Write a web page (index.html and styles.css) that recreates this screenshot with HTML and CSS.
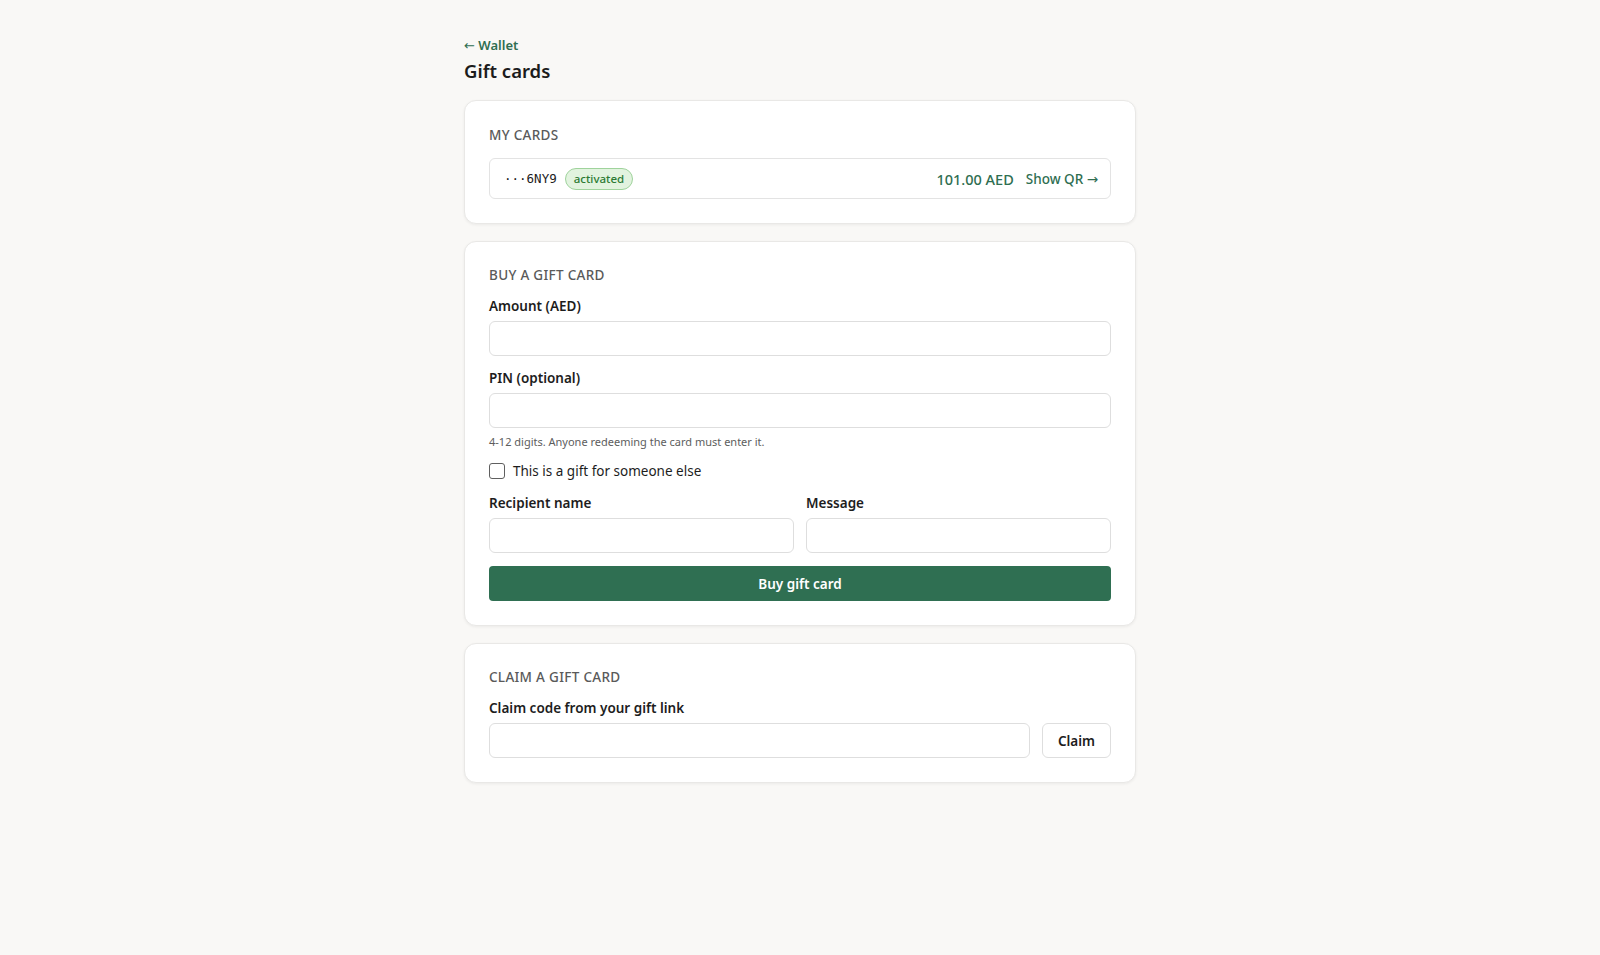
FILE: index.html
```html
<!DOCTYPE html>
<html lang="en">
<head>
<meta charset="utf-8">
<title>Gift cards</title>
<link rel="stylesheet" href="styles.css">
</head>
<body>
<main class="page">
  <a class="back" href="#"><span class="arrow">←</span> Wallet</a>
  <h1 class="title">Gift cards</h1>

  <section class="card card--cards">
    <h2 class="section-title section-title--cards">MY CARDS</h2>
    <div class="gc-row">
      <span class="gc-code">···6NY9</span>
      <span class="badge">activated</span>
      <span class="spacer"></span>
      <span class="gc-amount">101.00 AED</span>
      <a class="gc-link" href="#">Show QR <span class="arrow">→</span></a>
    </div>
  </section>

  <section class="card">
    <h2 class="section-title">BUY A GIFT CARD</h2>
    <div class="field">
      <label class="label">Amount (AED)</label>
      <input class="input" type="text">
    </div>
    <div class="field">
      <label class="label">PIN (optional)</label>
      <input class="input" type="text">
      <div class="hint">4-12 digits. Anyone redeeming the card must enter it.</div>
    </div>
    <label class="check">
      <span class="box"></span>
      <span>This is a gift for someone else</span>
    </label>
    <div class="two-col">
      <div class="field">
        <label class="label">Recipient name</label>
        <input class="input" type="text">
      </div>
      <div class="field">
        <label class="label">Message</label>
        <input class="input" type="text">
      </div>
    </div>
    <button class="btn-primary">Buy gift card</button>
  </section>

  <section class="card">
    <h2 class="section-title">CLAIM A GIFT CARD</h2>
    <label class="label">Claim code from your gift link</label>
    <div class="claim-row">
      <input class="input" type="text">
      <button class="btn-secondary">Claim</button>
    </div>
  </section>
</main>
</body>
</html>
```

FILE: styles.css
```css
* { box-sizing: border-box; }
html, body { margin: 0; padding: 0; }
body {
  background: #f9f8f6;
  font-family: "Noto Sans", "Open Sans", sans-serif;
  color: #1d1d1d;
}
.page {
  width: 672px;
  margin: 0 auto;
  padding: 36px 0 40px;
  display: flex;
  flex-direction: column;
}
.arrow {
  font-family: "DejaVu Sans", sans-serif;
  font-weight: 400;
  font-size: 1em;
}
.back {
  color: #2f6e51;
  font-size: 13px;
  font-weight: 600;
  text-decoration: none;
  line-height: 18px;
}
.title {
  margin: 2px 0 15px;
  font-size: 18.5px;
  font-weight: 600;
  line-height: 28px;
  color: #1c1c1c;
}
.card {
  background: #fff;
  border: 1px solid #e9e8e6;
  border-radius: 12px;
  box-shadow: 0 1px 3px rgba(0,0,0,0.06);
  padding: 23px 24px 24px;
  margin-bottom: 17px;
}
.card--cards { padding-top: 24px; }
.section-title {
  margin: 0 0 11px;
  font-size: 13.5px;
  font-weight: 500;
  letter-spacing: 0.3px;
  color: #5a5a5a;
  line-height: 20px;
}
.section-title--cards { margin-bottom: 13px; }
.gc-row {
  display: flex;
  align-items: center;
  border: 1px solid #e3e3e3;
  border-radius: 6px;
  height: 41px;
  padding: 0 12px 0 14px;
}
.gc-code {
  font-family: "DejaVu Sans Mono", "Liberation Mono", monospace;
  font-size: 12.5px;
  color: #1d1d1d;
  margin-right: 8px;
}
.badge {
  font-size: 11.5px;
  font-weight: 500;
  color: #2c7a33;
  background: #e2f3df;
  border: 1px solid #9fd39c;
  border-radius: 999px;
  padding: 1px 8px 2px;
  line-height: 17px;
}
.spacer { flex: 1; }
.gc-amount {
  color: #2f6e51;
  font-size: 14.5px;
  font-weight: 500;
  margin-right: 12px;
}
.gc-link {
  color: #2f6e51;
  font-size: 13.5px;
  font-weight: 500;
  text-decoration: none;
}
.field {
  display: flex;
  flex-direction: column;
  margin-bottom: 12px;
}
.label {
  display: block;
  font-size: 13.5px;
  font-weight: 600;
  color: #1d1d1d;
  line-height: 20px;
  margin-bottom: 5px;
}
.input {
  width: 100%;
  height: 35px;
  border: 1px solid #dedede;
  border-radius: 6px;
  background: #fff;
  font: inherit;
  padding: 0 10px;
}
.hint {
  font-size: 11px;
  color: #5d5d5d;
  margin-top: 6px;
  line-height: 15px;
}
.check {
  display: flex;
  align-items: center;
  gap: 8px;
  font-size: 13.5px;
  color: #1d1d1d;
  line-height: 20px;
  margin-bottom: 12px;
}
.box {
  width: 16px;
  height: 16px;
  border: 1px solid #5f5f5f;
  border-radius: 3px;
  background: #fff;
}
.two-col {
  display: grid;
  grid-template-columns: 1fr 1fr;
  gap: 12px;
}
.two-col .field { margin-bottom: 13px; }
.btn-primary {
  width: 100%;
  height: 35px;
  border: none;
  border-radius: 4px;
  background: #2f6f52;
  color: #fff;
  font-family: inherit;
  font-size: 13.5px;
  font-weight: 600;
}
.claim-row {
  display: flex;
  gap: 12px;
}
.claim-row .input { flex: 1; }
.btn-secondary {
  width: 69px;
  height: 35px;
  background: #fff;
  border: 1px solid #dedede;
  border-radius: 6px;
  font-family: inherit;
  font-size: 13.5px;
  font-weight: 600;
  color: #1d1d1d;
}
```
